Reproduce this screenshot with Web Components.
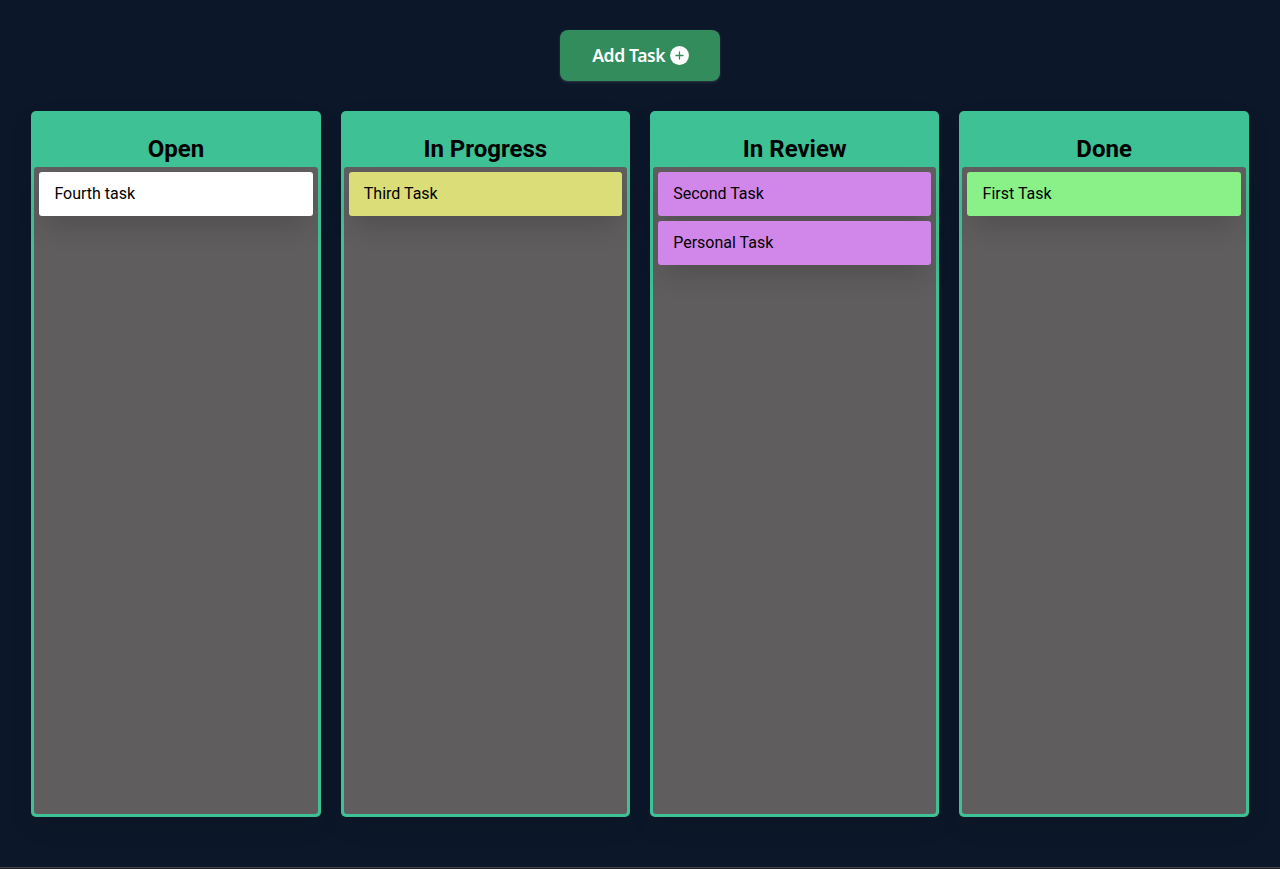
<!DOCTYPE html>
<html lang="en">
<head>
<meta charset="utf-8">
<title>Task Board</title>
<style>
html, body { margin: 0; height: 100%; }
body { font-family: Roboto, sans-serif; background: #0c1729; color: #000; overflow: hidden; }
</style>
</head>
<body>
<task-board>
  <add-button slot="action">Add Task</add-button>
  <task-column heading="Open"><task-card>Fourth task</task-card></task-column>
  <task-column heading="In Progress" style="--card:#dbdd79"><task-card>Third Task</task-card></task-column>
  <task-column heading="In Review" style="--card:#d187e9"><task-card>Second Task</task-card><task-card>Personal Task</task-card></task-column>
  <task-column heading="Done" style="--card:#89f188"><task-card>First Task</task-card></task-column>
</task-board>
<script>
class BaseElement extends HTMLElement {
  constructor() {
    super();
    this.attachShadow({ mode: 'open' }).innerHTML = this.constructor.markup;
  }
}

customElements.define('task-board', class extends BaseElement {
  static markup = `
    <style>
      :host { display: flex; flex-direction: column; box-sizing: border-box; height: 869px; }
      header { display: flex; justify-content: center; padding: 30px 0; height: 51px; }
      main { display: grid; grid-template-columns: repeat(4, minmax(0, 1fr)); gap: 20px; padding: 0 31.2px; height: 706px; }
      footer { margin-top: auto; height: 1px; background: #1f1f1f; border-top: 1px solid #464646; }
    </style>
    <header><slot name="action"></slot></header>
    <main><slot></slot></main>
    <footer></footer>`;
});

customElements.define('add-button', class extends BaseElement {
  static markup = `
    <style>
      :host { display: block; }
      button { display: flex; align-items: center; justify-content: center; gap: 5px; box-sizing: border-box;
        width: 160px; height: 51px; padding: 0 0 0 1.4px; border: 0; border-radius: 8px; background: #328c5c; color: #fff;
        font: 600 17.5px "Noto Sans", sans-serif; letter-spacing: -0.35px;
        box-shadow: 0 1px 3px rgba(255,255,255,.16); white-space: nowrap; }
      span { padding-bottom: 2px; }
      svg { display: block; width: 19px; height: 19px; }
    </style>
    <button><span><slot></slot></span><svg viewBox="0 0 19 19"><circle cx="9.5" cy="9.5" r="9.4" fill="#fff"/><path d="M9.5 6v7M6 9.5h7" fill="none" stroke="#328c5c" stroke-width="1.3" stroke-linecap="round"/></svg></button>`;
});

customElements.define('task-column', class extends BaseElement {
  static markup = `
    <style>
      :host { display: flex; flex-direction: column; box-sizing: border-box; padding: 3px; border-radius: 5px;
        background: #3ec195; box-shadow: 0 10px 25px rgba(0,0,0,.08); }
      h2 { margin: 0; padding-top: 21px; height: 32px; line-height: 28px; font-size: 24px; font-weight: 700; text-align: center; }
      section { flex: 1; display: flex; flex-direction: column; gap: 5px; padding: 5px; border-radius: 3px; background: #605d5e; }
    </style>
    <h2></h2>
    <section><slot></slot></section>`;
  connectedCallback() {
    this.shadowRoot.querySelector('h2').textContent = this.getAttribute('heading');
  }
});

customElements.define('task-card', class extends BaseElement {
  static markup = `
    <style>
      :host { display: flex; align-items: center; box-sizing: border-box; height: 44px; padding: 0 15.2px 2px; border-radius: 3px;
        background: var(--card, #fff); font-size: 16px; box-shadow: 0 15px 27px -5px rgba(0,0,0,.16); }
    </style>
    <slot></slot>`;
});
</script>
</body>
</html>
